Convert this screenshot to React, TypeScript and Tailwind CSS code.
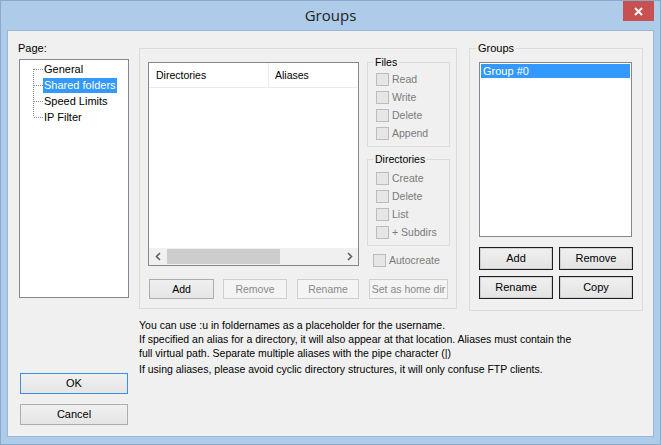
import React from "react";

const ui = "font-['Liberation_Sans',Arial,sans-serif] text-[11px] leading-[13px]";
const small = "text-[10.5px]";

type BtnKind = "normal" | "disabled" | "dark" | "default";

function Btn({
  label,
  kind = "normal",
  className = "",
}: {
  label: string;
  kind?: BtnKind;
  className?: string;
}) {
  const styles: Record<BtnKind, string> = {
    normal: "border-[#adadad] bg-linear-to-b from-[#f0f0f0] to-[#e5e5e5] text-black",
    disabled: "border-[#cfcfcf] bg-[#f4f4f4] text-[#8a8a8a]",
    dark: "border-[#1e1e1e] bg-linear-to-b from-[#f0f0f0] to-[#e3e3e3] text-black shadow-[inset_0_0_0_1px_#d0d0d0]",
    default: "border-[#3c8fe8] bg-linear-to-b from-[#f0f0f0] to-[#e5e5e5] text-black",
  };
  return (
    <div
      className={`flex items-center justify-center border box-border whitespace-nowrap ${styles[kind]} ${className}`}
    >
      {label}
    </div>
  );
}

function Check({ label, className = "" }: { label: string; className?: string }) {
  return (
    <div className={`flex h-[18px] items-center ${className}`}>
      <div className="h-[13px] w-[13px] border border-[#bcbcbc] bg-[#e6e6e6]" />
      <span className={`ml-[3px] text-[#7a7a7a] ${small}`}>{label}</span>
    </div>
  );
}

function TreeLine({ pos }: { pos: "first" | "mid" | "last" }) {
  const y1 = pos === "first" ? 8 : 0;
  const y2 = pos === "last" ? 8 : 16;
  return (
    <svg width="10" height="16" className="shrink-0">
      <line x1="0.5" y1={y1} x2="0.5" y2={y2} stroke="#8a8a8a" strokeDasharray="1 1" />
      <line x1="1" y1="8.5" x2="10" y2="8.5" stroke="#8a8a8a" strokeDasharray="1 1" />
    </svg>
  );
}

const pages = ["General", "Shared folders", "Speed Limits", "IP Filter"];

export default function App() {
  return (
    <div className={`flex h-[445px] w-[661px] flex-col border border-[#8aa9cf] bg-[#aecbe9] ${ui}`}>
      {/* title bar */}
      <div className="grid h-[29px] grid-cols-[1fr_auto_1fr]">
        <div />
        <div className="flex items-center font-['Open_Sans',sans-serif] text-[15px] text-[#222]">
          Groups
        </div>
        <div className="flex justify-end">
          <div className="mr-[6px] flex h-[20px] w-[31px] items-center justify-center bg-[#c75050]">
            <svg width="9" height="9" viewBox="0 0 9 9">
              <path d="M1 1L8 8M8 1L1 8" stroke="white" strokeWidth="2" />
            </svg>
          </div>
        </div>
      </div>

      {/* client */}
      <div className="mx-[6px] flex h-[407px] items-start border border-[#9ab7d8] bg-[#f0f0f0]">
        {/* left column */}
        <div className="ml-[11px] flex w-[110px] flex-col">
          <div className="mt-[11px] ml-[-1px] text-black">Page:</div>
          <div className="mt-[4px] h-[239px] border border-[#828790] bg-white pt-[1px] pl-[13px]">
            {pages.map((p, i) => (
              <div key={p} className="flex h-[16px] items-center">
                <TreeLine pos={i === 0 ? "first" : i === pages.length - 1 ? "last" : "mid"} />
                <span
                  className={
                    i === 1
                      ? "flex h-[15px] items-center bg-[#3399ff] px-[1px] text-white"
                      : "px-[1px] text-black"
                  }
                >
                  {p}
                </span>
              </div>
            ))}
          </div>
          <Btn label="OK" kind="default" className="mt-[75px] h-[21px] w-[108px] ml-[1px]" />
          <Btn label="Cancel" className="mt-[10px] h-[21px] w-[108px] ml-[1px]" />
        </div>

        {/* middle column */}
        <div className="ml-[10px] flex w-[318px] flex-col">
          <div className="mt-[17px] flex h-[261px] flex-col border border-[#dcdcdc]">
            <div className="flex h-[230px] items-start pl-[8px]">
              {/* directories list */}
              <div className="mt-[13px] flex h-[204px] w-[211px] flex-col border border-[#828790] bg-white">
                <div className={`flex h-[25px] border-b border-[#e6ecf4] text-black ${small}`}>
                  <div className="flex w-[120px] items-center border-r border-[#e8ecf2] pl-[7px]">
                    Directories
                  </div>
                  <div className="flex items-center pl-[6px]">Aliases</div>
                </div>
                <div className="flex-1" />
                <div className="flex h-[17px] items-center bg-[#f0f0f0]">
                  <div className="flex w-[17px] items-center justify-center">
                    <svg width="6" height="9" viewBox="0 0 6 9">
                      <path d="M5 1L1.5 4.5L5 8" fill="none" stroke="#606060" strokeWidth="1.6" />
                    </svg>
                  </div>
                  <div className="ml-[1px] h-[15px] w-[113px] bg-[#cdcdcd]" />
                  <div className="flex-1" />
                  <div className="flex w-[17px] items-center justify-center">
                    <svg width="6" height="9" viewBox="0 0 6 9">
                      <path d="M1 1L4.5 4.5L1 8" fill="none" stroke="#606060" strokeWidth="1.6" />
                    </svg>
                  </div>
                </div>
              </div>

              {/* permissions */}
              <div className="ml-[8px] mt-[6px] flex w-[83px] flex-col">
                <fieldset className="border border-[#dcdcdc] pl-[8px] pt-[1px] pb-[4px]">
                  <legend className={`ml-[-3px] px-[2px] leading-[14px] text-black ${small}`}>Files</legend>
                  <Check label="Read" />
                  <Check label="Write" />
                  <Check label="Delete" />
                  <Check label="Append" />
                </fieldset>
                <fieldset className="mt-[5px] border border-[#dcdcdc] pl-[8px] pt-[3px] pb-[4px]">
                  <legend className={`ml-[-3px] px-[2px] leading-[14px] text-black ${small}`}>Directories</legend>
                  <Check label="Create" />
                  <Check label="Delete" />
                  <Check label="List" />
                  <Check label="+ Subdirs" />
                </fieldset>
                <Check label="Autocreate" className="mt-[5px] ml-[6px]" />
              </div>
            </div>

            <div className={`flex pl-[9px] ${small}`}>
              <Btn label="Add" className="h-[20px] w-[65px]" />
              <Btn label="Remove" kind="disabled" className="ml-[9px] h-[20px] w-[64px]" />
              <Btn label="Rename" kind="disabled" className="ml-[10px] h-[20px] w-[62px]" />
              <Btn label="Set as home dir" kind="disabled" className="ml-[10px] h-[20px] w-[79px]" />
            </div>
          </div>

          <div className={`mt-[9px] whitespace-nowrap leading-[14px] text-black ${small}`}>
            <div>You can use :u in foldernames as a placeholder for the username.</div>
            <div>
              If specified an alias for a directory, it will also appear at that location. Aliases must contain the
              <br />
              full virtual path. Separate multiple aliases with the pipe character (|)
            </div>
            <div className="mt-[2px]">
              If using aliases, please avoid cyclic directory structures, it will only confuse FTP clients.
            </div>
          </div>
        </div>

        {/* right column */}
        <fieldset className="ml-[12px] mt-[10px] w-[174px] border border-[#dcdcdc] px-[9px] pb-[11px]">
          <legend className="ml-[-3px] px-[2px] leading-[14px] text-black">Groups</legend>
          <div className="mt-[7px] h-[175px] w-[153px] border border-[#828790] bg-white p-[1px]">
            <div className="flex h-[14px] items-center bg-[#3399ff] pl-[2px] text-white">Group #0</div>
          </div>
          <div className="mt-[10px] flex">
            <Btn label="Add" kind="dark" className="h-[23px] w-[74px]" />
            <Btn label="Remove" kind="dark" className="ml-[6px] h-[23px] w-[74px]" />
          </div>
          <div className="mt-[6px] flex">
            <Btn label="Rename" kind="dark" className="h-[23px] w-[74px]" />
            <Btn label="Copy" kind="dark" className="ml-[6px] h-[23px] w-[74px]" />
          </div>
        </fieldset>
      </div>
    </div>
  );
}
